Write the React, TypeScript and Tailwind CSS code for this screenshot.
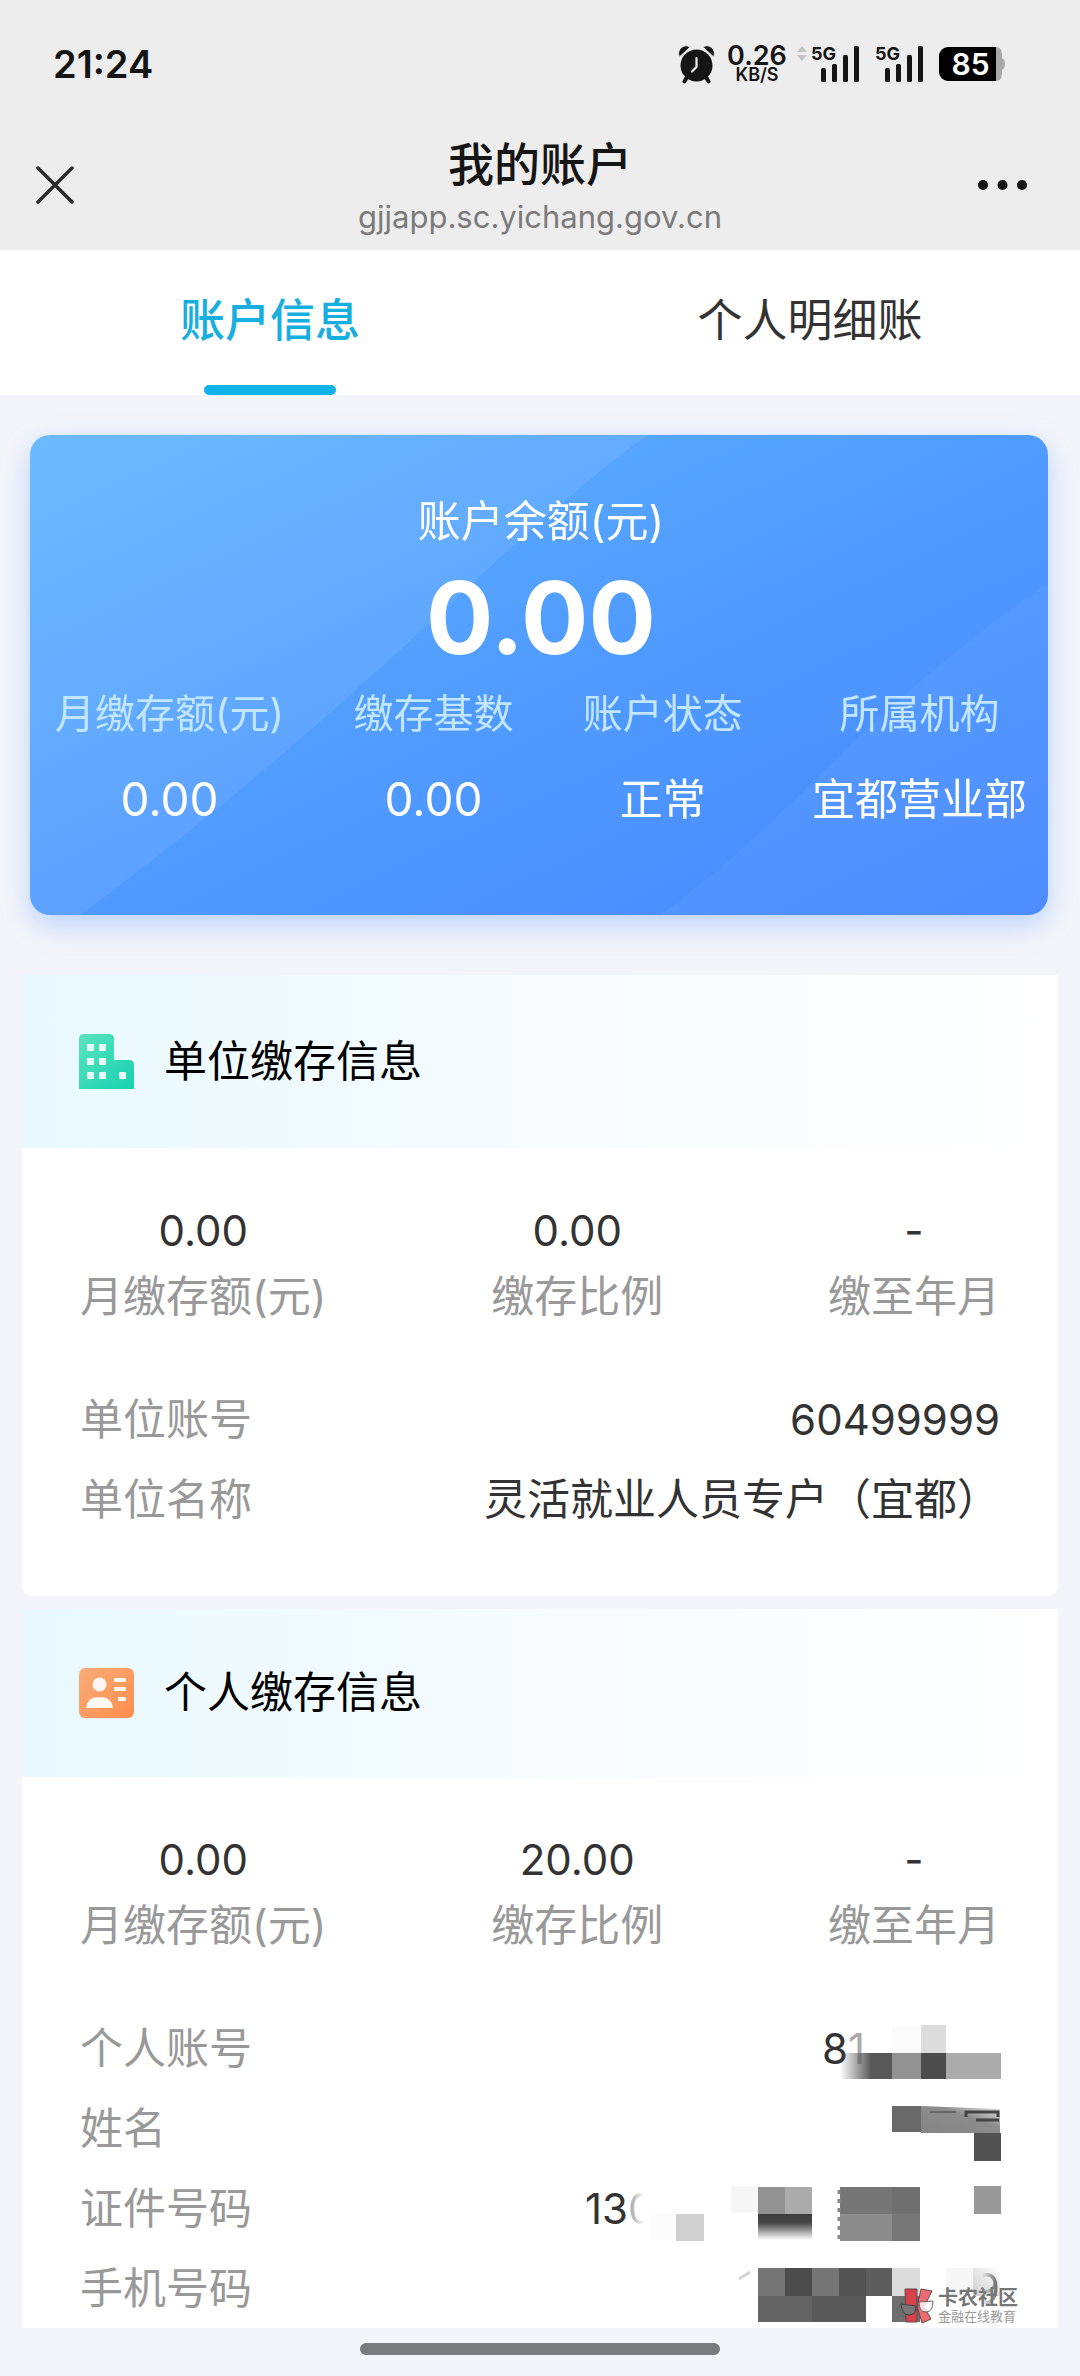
import { useState, type ReactNode } from 'react';

const tabs = ['账户信息', '个人明细账'];

const summary = [
  { label: '月缴存额(元)', value: '0.00', numeric: true },
  { label: '缴存基数', value: '0.00', numeric: true },
  { label: '账户状态', value: '正常', numeric: false },
  { label: '所属机构', value: '宜都营业部', numeric: false },
];

const unitStats = [
  { label: '月缴存额(元)', value: '0.00' },
  { label: '缴存比例', value: '0.00' },
  { label: '缴至年月', value: '-' },
];

const personStats = [
  { label: '月缴存额(元)', value: '0.00' },
  { label: '缴存比例', value: '20.00' },
  { label: '缴至年月', value: '-' },
];

function AlarmIcon() {
  return (
    <svg width="37" height="39" viewBox="0 0 37 39" aria-hidden="true">
      <path d="M9 32 6.500 36.500M28 32l2.500 4.500" stroke="#151515" strokeWidth="4" strokeLinecap="round" />
      <circle cx="18.500" cy="20.500" r="16" fill="#151515" />
      <path
        d="M1 11C-1 4 6-1 11 1.500Q12 2 11 3L3 10.500Q1.500 12 1 11ZM36 11C38 4 31-1 26 1.500Q25 2 26 3l8 7.500Q35.500 12 36 11Z"
        fill="#151515"
        stroke="#ededed"
        strokeWidth="0.800"
      />
      <path d="M18.500 13v9l-4.500 4.500" fill="none" stroke="#ededed" strokeWidth="2.200" strokeLinecap="round" strokeLinejoin="round" />
    </svg>
  );
}

function Signal({ arrows = false }: { arrows?: boolean }) {
  return (
    <span className="relative flex h-9 w-12 justify-end">
      {arrows && (
        <svg className="absolute top-0 -left-3.5" width="10" height="15" viewBox="0 0 10 15" aria-hidden="true">
          <path d="M5 0l5 6H0ZM5 15l5-6H0Z" fill="#c4c4c4" />
        </svg>
      )}
      <span className="absolute top-0 left-0 text-[18px] leading-4 font-bold">5G</span>
      <svg width="38" height="36" viewBox="0 0 38 36" fill="#151515" aria-hidden="true">
        <rect x="0" y="22" width="5" height="14" rx="1.500" />
        <rect x="11" y="18" width="5" height="18" rx="1.500" />
        <rect x="22" y="9" width="5" height="27" rx="1.500" />
        <rect x="33" y="0" width="5" height="36" rx="1.500" />
      </svg>
    </span>
  );
}

function StatusBar() {
  return (
    <div className="flex h-[124px] items-center justify-between pt-1 pr-[75px] pl-[53px] text-[#151515]">
      <span className="text-[38px] font-semibold">21:24</span>
      <div className="flex items-center">
        <AlarmIcon />
        <div className="ml-3 flex w-[60px] flex-col items-center font-semibold">
          <span className="text-[27px] leading-[22px]">0.26</span>
          <span className="text-[18px] leading-4">KB/S</span>
        </div>
        <div className="ml-6 flex gap-4">
          <Signal arrows />
          <Signal />
        </div>
        <div className="ml-4 flex items-center">
          <span className="flex h-[34px] w-[57px] items-center justify-center rounded-l-[9px] bg-black pl-1.5 text-[30px] font-semibold text-white">
            85
          </span>
          <svg width="9" height="34" viewBox="0 0 9 34" aria-hidden="true">
            <path d="M0 0c4 0 6 3 6 8v3c2 1 3 3 3 6s-1 5-3 6v3c0 5-2 8-6 8Z" fill="#a9a9a9" />
          </svg>
        </div>
      </div>
    </div>
  );
}

function NavBar() {
  return (
    <div className="flex h-[126px] items-center justify-between pr-[52px] pb-1 pl-9">
      <button type="button" aria-label="关闭" className="w-[66px]">
        <svg width="38" height="38" viewBox="0 0 38 38" aria-hidden="true">
          <path d="M2 2l34 34M36 2 2 36" stroke="#2b2b2b" strokeWidth="3.500" strokeLinecap="round" />
        </svg>
      </button>
      <div className="flex flex-col items-center pt-1.5">
        <h1 className="text-[46px] leading-[58px] font-medium text-[#151515]">我的账户</h1>
        <p className="text-[31px] leading-[48px] text-[#7b7b7b]">gjjapp.sc.yichang.gov.cn</p>
      </div>
      <button type="button" aria-label="更多" className="w-[50px]">
        <svg width="50" height="10" viewBox="0 0 50 10" fill="#151515" aria-hidden="true">
          <circle cx="5" cy="5" r="5" />
          <circle cx="24.500" cy="5" r="5" />
          <circle cx="44" cy="5" r="5" />
        </svg>
      </button>
    </div>
  );
}

function BalanceCard() {
  return (
    <section className="relative mr-8 ml-[30px] overflow-hidden rounded-[20px] bg-linear-to-br from-[#61b5ff] via-[#509bff] to-[#4788ff] pt-14 pr-[21px] pb-[86px] pl-[25px] text-center text-white">
      <svg className="absolute inset-0 h-full w-full" viewBox="0 0 1018 480" preserveAspectRatio="none" aria-hidden="true">
        <path d="M0 0H618Q560 40 440 150Q240 340 50 480H0Z" fill="#fff" fillOpacity="0.08" />
        <path d="M1018 148Q900 230 800 330T630 480H1018Z" fill="#fff" fillOpacity="0.04" />
      </svg>
      <div className="relative">
        <h2 className="text-[43px] leading-[60px]">账户余额(元)</h2>
        <p className="text-[100px] leading-[134px] font-bold">0.00</p>
        <dl className="flex justify-between">
          {summary.map((item) => (
            <div key={item.label}>
              <dt className="text-[40px] leading-[58px] text-[#c3e6ff]">{item.label}</dt>
              <dd className={item.numeric ? 'mt-[26px] text-[46px] leading-[60px]' : 'mt-[26px] text-[43px] leading-[60px]'}>
                {item.value}
              </dd>
            </div>
          ))}
        </dl>
      </div>
    </section>
  );
}

function BuildingIcon() {
  return (
    <svg width="55" height="55" viewBox="0 0 55 55" aria-hidden="true">
      <defs>
        <linearGradient id="building" x1="0" y1="0" x2="1" y2="1">
          <stop offset="0" stopColor="#5be3be" />
          <stop offset="1" stopColor="#17d1b0" />
        </linearGradient>
      </defs>
      <path d="M0 5Q0 0 5 0H30Q35 0 35 5V26H50Q55 26 55 31V55H0Z" fill="url(#building)" />
      <g fill="#e6fcf8">
        <rect x="8" y="10" width="7" height="7" rx="1" />
        <rect x="20" y="10" width="7" height="7" rx="1" />
        <rect x="8" y="24" width="7" height="7" rx="1" />
        <rect x="20" y="24" width="7" height="7" rx="1" />
        <rect x="8" y="38" width="7" height="7" rx="1" />
        <rect x="20" y="38" width="7" height="7" rx="1" />
        <rect x="40" y="38" width="7" height="7" rx="1" />
      </g>
    </svg>
  );
}

function PersonIcon() {
  return (
    <svg width="55" height="50" viewBox="0 0 55 50" aria-hidden="true">
      <defs>
        <linearGradient id="person" x1="0" y1="0" x2="1" y2="1">
          <stop offset="0" stopColor="#f9ac78" />
          <stop offset="1" stopColor="#ff8d4d" />
        </linearGradient>
      </defs>
      <rect width="55" height="50" rx="6" fill="url(#person)" />
      <g fill="#fff8f2">
        <circle cx="20.500" cy="16.500" r="7" />
        <path d="M7 40C8 32 13 29 20.500 29S33 32 34 40Z" />
        <rect x="35" y="10" width="12" height="4" rx="1" />
        <rect x="35" y="19" width="12" height="4" rx="1" />
        <rect x="39" y="29" width="8" height="4" rx="1" />
      </g>
    </svg>
  );
}

type Stat = { label: string; value: string };

function InfoSection({ icon, title, stats, children }: { icon: ReactNode; title: string; stats: Stat[]; children: ReactNode }) {
  return (
    <>
      <header className="flex items-center gap-[30px] bg-linear-to-r from-[#e9f9ff] via-[#f6fcff] to-white px-[57px] py-[59px]">
        {icon}
        <h2 className="pb-0.5 text-[43px] leading-[46px] text-black">{title}</h2>
      </header>
      <dl className="flex justify-between px-[58px] pt-[50px] text-center">
        {stats.map((item) => (
          <div key={item.label} className="flex flex-col-reverse">
            <dt className="text-[43px] leading-[64px] text-[#999]">{item.label}</dt>
            <dd className="text-[42px] leading-[66px]">{item.value}</dd>
          </div>
        ))}
      </dl>
      <dl className="mt-[51px] px-[58px]">{children}</dl>
    </>
  );
}

function Row({ label, children }: { label: string; children: ReactNode }) {
  return (
    <div className="flex h-20 items-center justify-between text-[43px]">
      <dt className="text-[#999]">{label}</dt>
      <dd>{children}</dd>
    </div>
  );
}

// Pixelated blocks hiding the private values, each row is 80px high
function MaskedAccount() {
  return (
    <span className="relative flex h-20 w-[178px] items-center text-[42px]">
      8<span className="text-[#aaa]">1</span>
      <svg className="absolute inset-y-0 right-0 overflow-visible" width="174" height="80" viewBox="0 0 174 80" aria-hidden="true">
        <defs>
          <linearGradient id="fade-right" x1="0" y1="0" x2="1" y2="0">
            <stop offset="0" stopColor="#585858" stopOpacity="0" />
            <stop offset="0.600" stopColor="#585858" />
            <stop offset="1" stopColor="#585858" />
          </linearGradient>
        </defs>
        <rect x="66" y="17" width="28" height="28" fill="#fbfbfb" />
        <rect x="95" y="17" width="25" height="28" fill="#dcdcdc" />
        <rect x="14" y="45" width="52" height="26" fill="url(#fade-right)" />
        <rect x="66" y="45" width="29" height="26" fill="#929292" />
        <rect x="95" y="45" width="25" height="26" fill="#4c4c4c" />
        <rect x="120" y="45" width="55" height="26" fill="#ababab" />
      </svg>
    </span>
  );
}

function MaskedName() {
  return (
    <svg className="overflow-visible" width="112" height="80" viewBox="0 0 112 80" aria-hidden="true">
      <defs>
        <linearGradient id="name-block" x1="0" y1="1" x2="1" y2="0">
          <stop offset="0" stopColor="#858585" />
          <stop offset="0.600" stopColor="#8c8c8c" />
          <stop offset="1" stopColor="#eee" />
        </linearGradient>
      </defs>
      <rect x="4" y="18" width="29" height="26" fill="#696969" />
      <path d="M33 18 112 21V45H33Z" fill="url(#name-block)" />
      <path d="M42 24H68" stroke="#666" strokeWidth="2" />
      <path d="M78 29V24H110V29M88 32H111" fill="none" stroke="#444" strokeWidth="3" />
      <rect x="86" y="45" width="27" height="28" fill="#525252" />
    </svg>
  );
}

function MaskedIdCard() {
  return (
    <span className="relative flex h-20 w-[415px] items-center text-[42px]">
      13
      <span className="bg-linear-to-r from-[#999] to-transparent to-60% bg-clip-text text-transparent">0</span>
      <svg className="absolute inset-y-0 right-0 overflow-visible" width="413" height="80" viewBox="0 0 413 80" aria-hidden="true">
        <defs>
          <linearGradient id="fade-down" x1="0" y1="0" x2="0" y2="1">
            <stop offset="0" stopColor="#3c3c3c" />
            <stop offset="0.350" stopColor="#484848" />
            <stop offset="1" stopColor="#fff" />
          </linearGradient>
        </defs>
        <rect x="63" y="46" width="26" height="27" fill="#fcfcfc" />
        <rect x="89" y="46" width="28" height="27" fill="#d0d0d0" />
        <rect x="144" y="18" width="27" height="27" fill="#f6f6f6" />
        <rect x="171" y="19" width="27" height="27" fill="#929292" />
        <rect x="198" y="19" width="27" height="27" fill="#ababab" />
        <rect x="171" y="46" width="54" height="26" fill="url(#fade-down)" />
        <rect x="253" y="19" width="52" height="27" fill="#757575" />
        <rect x="305" y="19" width="28" height="27" fill="#6f6f6f" />
        <rect x="253" y="46" width="52" height="27" fill="#8c8c8c" />
        <rect x="305" y="46" width="28" height="27" fill="#777" />
        <path d="M252 22v49" stroke="#888" strokeWidth="3" strokeDasharray="4 5" />
        <rect x="387" y="18" width="27" height="28" fill="#999" />
      </svg>
    </span>
  );
}

function MaskedPhone() {
  return (
    <span className="relative flex h-20 w-[262px] items-center justify-end text-[42px]">
      <svg className="absolute inset-0 overflow-visible" width="262" height="80" viewBox="0 0 262 80" aria-hidden="true">
        <defs>
          <linearGradient id="phone-end" x1="0" y1="1" x2="1" y2="0">
            <stop offset="0" stopColor="#cfcfcf" />
            <stop offset="1" stopColor="#fff" />
          </linearGradient>
        </defs>
        <path d="M1 31 12 24" stroke="#d5d5d5" strokeWidth="3" />
        <rect x="20" y="20" width="27" height="28" fill="#757575" />
        <rect x="47" y="20" width="27" height="28" fill="#4c4c4c" />
        <rect x="74" y="20" width="27" height="28" fill="#757575" />
        <rect x="101" y="20" width="27" height="28" fill="#535353" />
        <rect x="128" y="20" width="26" height="28" fill="#5d5d5d" />
        <rect x="154" y="20" width="28" height="28" fill="#dcdcdc" />
        <rect x="208" y="20" width="27" height="28" fill="#f7f7f7" />
        <rect x="235" y="20" width="27" height="28" fill="url(#phone-end)" />
        <rect x="20" y="48" width="54" height="26" fill="#646464" />
        <rect x="74" y="48" width="54" height="26" fill="#595959" />
        <rect x="154" y="48" width="28" height="26" fill="#6e6e6e" />
      </svg>
      <span className="relative bg-linear-to-r from-transparent from-30% to-[#555] bg-clip-text text-transparent">9</span>
    </span>
  );
}

function Watermark() {
  return (
    <div className="absolute right-10 bottom-1 flex items-center gap-1">
      <svg width="34" height="36" viewBox="0 0 34 36" aria-hidden="true">
        <g stroke="#5e4a4c" strokeWidth="1">
          <path d="M5 1H17V34H6Z" fill="#d8404a" />
          <path d="M21 1 32 3 25 17 17 20Z" fill="#ee6a72" />
          <path d="M17 18 23 17 31 31 22 35Z" fill="#ee6a72" />
        </g>
        <path d="M1 16 16 18Q16 27 9 27T1 16Z" fill="#777" stroke="#444" />
        <path d="M19 14 33 13Q33 24 26 24T19 14Z" fill="#fff" fillOpacity="0.800" stroke="#666" />
      </svg>
      <div className="text-[#777]">
        <p className="text-[20px] leading-[20px] font-bold">卡农社区</p>
        <p className="text-[13px] leading-[16px] text-[#999]">金融在线教育</p>
      </div>
    </div>
  );
}

export default function App() {
  const [activeTab, setActiveTab] = useState(0);

  return (
    <div className="min-h-screen bg-[#f4f5fa] font-['Inter','Noto_Sans_CJK_SC',sans-serif] text-[#333]">
      <div className="bg-[#ededed]">
        <StatusBar />
        <NavBar />
      </div>

      <nav className="grid grid-cols-2 bg-white">
        {tabs.map((tab, i) => (
          <button
            key={tab}
            type="button"
            onClick={() => setActiveTab(i)}
            className={
              i === activeTab
                ? 'relative h-[145px] pb-1 text-[45px] font-medium text-[#17aee0]'
                : 'relative h-[145px] pb-1 text-[45px] text-[#333]'
            }
          >
            {tab}
            {i === activeTab && (
              <span className="absolute bottom-0 left-1/2 h-2.5 w-[132px] -translate-x-1/2 rounded-full bg-[#0fb2e9]" />
            )}
          </button>
        ))}
      </nav>

      <main className="pt-10">
        <div className="drop-shadow-[0_10px_14px_rgba(80,145,255,0.35)]">
          <BalanceCard />
        </div>

        <div className="mx-[22px] mt-[60px] overflow-hidden rounded-b-[10px] bg-white pb-[57px]">
          <InfoSection icon={<BuildingIcon />} title="单位缴存信息" stats={unitStats}>
            <Row label="单位账号">
              <span className="text-[42px]">60499999</span>
            </Row>
            <Row label="单位名称">灵活就业人员专户（宜都）</Row>
          </InfoSection>
        </div>

        <div className="relative mx-[22px] mt-[13px] bg-white">
          <InfoSection icon={<PersonIcon />} title="个人缴存信息" stats={personStats}>
            <Row label="个人账号">
              <MaskedAccount />
            </Row>
            <Row label="姓名">
              <MaskedName />
            </Row>
            <Row label="证件号码">
              <MaskedIdCard />
            </Row>
            <Row label="手机号码">
              <MaskedPhone />
            </Row>
          </InfoSection>
          <Watermark />
        </div>
      </main>

      <div className="flex justify-center pt-[15px] pb-4">
        <div className="h-3 w-1/3 rounded-full bg-[#7a7b7d]" />
      </div>
    </div>
  );
}
